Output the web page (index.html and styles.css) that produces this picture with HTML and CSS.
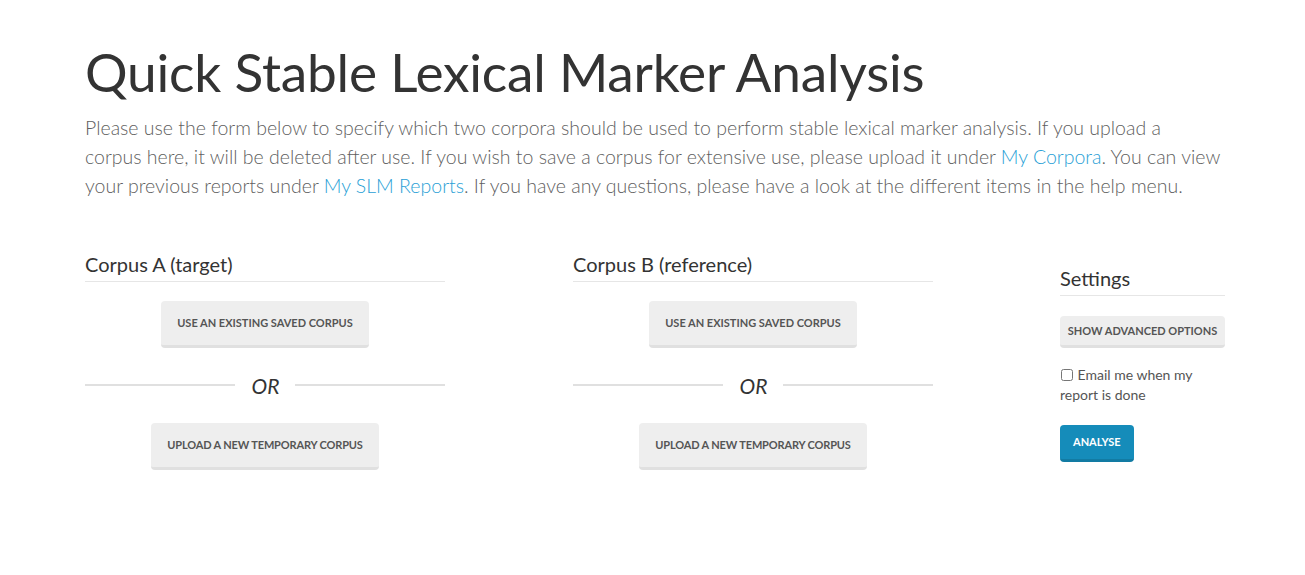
FILE: index.html
```html
<!DOCTYPE html>
<html lang="en">
<head>
<meta charset="utf-8">
<title>Quick Stable Lexical Marker Analysis</title>
<link rel="stylesheet" href="styles.css">
</head>
<body>
<div class="container">
  <h1 class="title">Quick Stable Lexical Marker Analysis</h1>
  <p class="lead">Please use the form below to specify which two corpora should be used to perform stable lexical marker analysis. If you upload a corpus here, it will be deleted after use. If you wish to save a corpus for extensive use, please upload it under <a href="#">My Corpora</a>. You can view your previous reports under <a href="#">My SLM Reports</a>. If you have any questions, please have a look at the different items in the help menu.</p>

  <div class="row">
    <div class="corpus-col">
      <h3 class="section-title">Corpus A (target)</h3>
      <div class="btn-line"><button class="btn btn-default btn-big">Use an existing saved corpus</button></div>
      <div class="or-sep"><span class="or-line"></span><span class="or-text">OR</span><span class="or-line"></span></div>
      <div class="btn-line btn-line-last"><button class="btn btn-default btn-big">Upload a new temporary corpus</button></div>
    </div>
    <div class="corpus-col">
      <h3 class="section-title">Corpus B (reference)</h3>
      <div class="btn-line"><button class="btn btn-default btn-big">Use an existing saved corpus</button></div>
      <div class="or-sep"><span class="or-line"></span><span class="or-text">OR</span><span class="or-line"></span></div>
      <div class="btn-line btn-line-last"><button class="btn btn-default btn-big">Upload a new temporary corpus</button></div>
    </div>
    <div class="settings-col">
      <h3 class="section-title">Settings</h3>
      <button class="btn btn-default btn-block">Show advanced options</button>
      <label class="check"><input type="checkbox"> Email me when my report is done</label>
      <button class="btn btn-primary">Analyse</button>
    </div>
  </div>
</div>
</body>
</html>
```

FILE: styles.css
```css
* { box-sizing: border-box; }

html, body {
  margin: 0;
  padding: 0;
  background: #fff;
}

body {
  font-family: "Lato", "Open Sans", sans-serif;
  color: #555;
}

.container {
  width: 1305px;
  padding: 0 80px 0 85px;
}

.title {
  margin: 37px 0 0 0;
  font-family: "Lato", sans-serif;
  font-weight: 400;
  font-size: 53.2px;
  line-height: 68px;
  color: #333;
  letter-spacing: -0.2px;
}

.lead {
  margin: 8px 0 0 0;
  max-width: 1136px;
  font-size: 19.5px;
  line-height: 29px;
  font-weight: 300;
  color: #5f5f5f;
}

.lead a {
  color: #2a9fd6;
  text-decoration: none;
}

.row {
  display: flex;
  gap: 128px;
  margin-top: 51px;
}

.corpus-col {
  width: 360px;
  flex: none;
}

.settings-col {
  width: 165px;
  flex: none;
  padding-top: 14px;
  margin-left: -1px;
}

.section-title {
  margin: 0;
  padding-bottom: 4px;
  font-size: 20px;
  line-height: 26px;
  font-weight: 400;
  color: #333;
  border-bottom: 1px solid #e6e6e6;
}

.btn {
  font-family: "Lato", sans-serif;
  font-weight: 700;
  font-size: 11px;
  text-transform: uppercase;
  color: #555;
  background: #eeeeee;
  border: 0;
  border-bottom: 3px solid #e0e0e0;
  border-radius: 4px;
  cursor: pointer;
  line-height: 14px;
}

.btn-line {
  display: flex;
  justify-content: center;
}

.btn-big {
  margin-top: 19px;
  padding: 15px 16px 15px;
  height: 47px;
}

.btn-line-last .btn-big {
  margin-top: 26px;
  letter-spacing: -0.15px;
}

.or-sep {
  display: flex;
  align-items: center;
  margin-top: 25px;
  height: 24px;
}

.or-line {
  flex: 1;
  height: 2px;
  background: #e0e0e0;
}

.or-text {
  padding: 0 16px 0 17px;
  font-size: 21px;
  font-style: italic;
  font-weight: 400;
  color: #333;
}

.btn-block {
  display: block;
  width: 100%;
  margin-top: 20px;
  height: 32px;
  padding: 8px 0 7px;
}

.check {
  display: block;
  margin-top: 17px;
  font-size: 14px;
  line-height: 20px;
  color: #555;
}

.check input {
  margin: 0 1px 0 1px;
  width: 12px;
  height: 12px;
  vertical-align: -1px;
}

.btn-primary {
  display: block;
  margin-top: 20px;
  height: 37px;
  padding: 10px 13px 10px;
  background: #158cba;
  border-bottom-color: #127ba3;
  color: #fff;
}
```
